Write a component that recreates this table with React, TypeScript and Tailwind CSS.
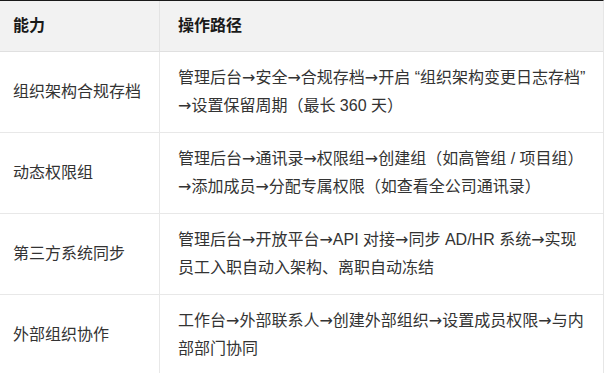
import React from "react";

const rows: { name: string; path: string }[] = [
  {
    name: "组织架构合规存档",
    path: "管理后台→安全→合规存档→开启 “组织架构变更日志存档”→设置保留周期（最长 360 天）",
  },
  {
    name: "动态权限组",
    path: "管理后台→通讯录→权限组→创建组（如高管组 / 项目组）→添加成员→分配专属权限（如查看全公司通讯录）",
  },
  {
    name: "第三方系统同步",
    path: "管理后台→开放平台→API 对接→同步 AD/HR 系统→实现员工入职自动入架构、离职自动冻结",
  },
  {
    name: "外部组织协作",
    path: "工作台→外部联系人→创建外部组织→设置成员权限→与内部部门协同",
  },
];

function PathText({ text }: { text: string }) {
  const tokens = text.split(/([→“”])/).filter((t) => t !== "");
  return (
    <span>
      {tokens.map((t, i) =>
        t === "→" ? (
          <span key={i} style={{ fontFamily: '"DejaVu Sans", sans-serif' }}>
            →
          </span>
        ) : t === "”" ? (
          <React.Fragment key={i}>
            <span style={{ fontFamily: '"Liberation Sans", sans-serif' }}>”</span>
            <wbr />
          </React.Fragment>
        ) : t === "“" ? (
          <span key={i} style={{ fontFamily: '"Liberation Sans", sans-serif' }}>
            “
          </span>
        ) : (
          <React.Fragment key={i}>{t}</React.Fragment>
        )
      )}
    </span>
  );
}

export default function App() {
  return (
    <div
      className="w-[606px] h-[373px] overflow-hidden bg-white"
      style={{ fontFamily: '"Liberation Sans", "Noto Sans CJK SC", sans-serif' }}
    >
      <div className="w-[604px] border-t border-[#1a1a1a] border-r border-r-[#e6e6e6]">
        <div className="grid grid-cols-[160px_1fr] bg-[#f2f2f2] border-b border-[#e0e0e0] h-[51px]">
          <div className="flex items-center pl-[13px] border-r border-[#e3e3e3] text-[16px] font-bold text-[#1a1a1a]">
            能力
          </div>
          <div className="flex items-center pl-[18px] text-[16px] font-bold text-[#1a1a1a]">
            操作路径
          </div>
        </div>
        {rows.map((r) => (
          <div
            key={r.name}
            className="grid grid-cols-[160px_1fr] border-b border-[#e8e8e8] min-h-[80px]"
          >
            <div className="flex items-center pl-[13px] border-r border-[#e8e8e8] text-[16px] text-[#333333]">
              {r.name}
            </div>
            <div className="flex items-center pl-[18px] pr-[13px] py-[12px] text-[16px] leading-[28px] text-[#333333]">
              <PathText text={r.path} />
            </div>
          </div>
        ))}
      </div>
    </div>
  );
}
